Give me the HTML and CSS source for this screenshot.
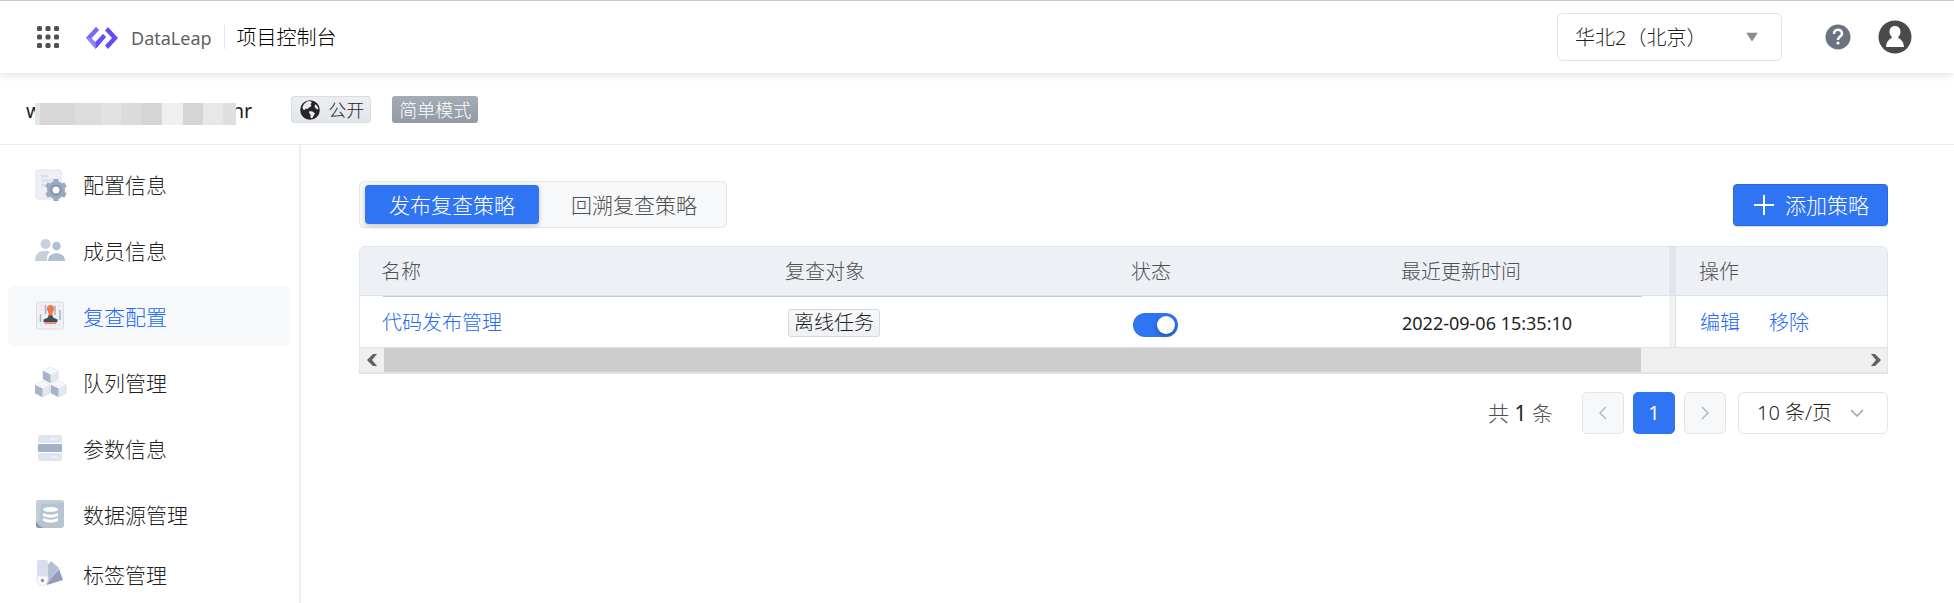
FILE: index.html
```
<!DOCTYPE html>
<html lang="zh-CN">
<head>
    <meta charset="UTF-8">
    <meta name="viewport" content="width=device-width, initial-scale=1.0">
    <title>项目控制台 - DataLeap</title>
    <link rel="stylesheet" href="styles.css">
</head>
<body>
    <header class="topbar">
        <button class="icon-button apps" aria-label="应用">
            <svg width="24" height="24" viewBox="0 0 24 24" fill="#505050">
                <rect x="1" y="1" width="5" height="5" rx="1.5"/><rect x="9.5" y="1" width="5" height="5" rx="1.5"/><rect x="18" y="1" width="5" height="5" rx="1.5"/>
                <rect x="1" y="9.5" width="5" height="5" rx="1.5"/><rect x="9.5" y="9.5" width="5" height="5" rx="1.5"/><rect x="18" y="9.5" width="5" height="5" rx="1.5"/>
                <rect x="1" y="18" width="5" height="5" rx="1.5"/><rect x="9.5" y="18" width="5" height="5" rx="1.5"/><rect x="18" y="18" width="5" height="5" rx="1.5"/>
            </svg>
        </button>
        <a href="#" class="brand">
            <svg width="32" height="22" viewBox="0 0 32 22">
                <path d="M10 0 13 3 5.500 11 9.500 15 17 7 20 10 9.500 22 0 11Z" fill="#8f83fb"/>
                <path d="M9.500 15 17 7 20 10 10 21.500Z" fill="#6650f5"/>
                <path d="M10 0 13 3 5.500 11 0 11Z" fill="#7a69f9"/>
                <path d="M22 0 32 11 22 22 19 18.500 26 11 19 3.500Z" fill="#624cf5"/>
            </svg>
            <span>DataLeap</span>
        </a>
        <span class="topbar-title">项目控制台</span>
        <div class="select region">
            <select aria-label="地域"><option>华北2（北京）</option></select>
            <svg width="12" height="9" viewBox="0 0 12 9"><path d="M0 0H12L6 9Z" fill="#8c8c8c"/></svg>
        </div>
        <button class="icon-button help" aria-label="帮助">
            <svg width="26" height="26" viewBox="0 0 26 26">
                <circle cx="13" cy="13" r="12.500" fill="#6b7280"/>
                <path d="M9 10C9 4.500 17 4.500 17 9.500 17 12.500 13 12.500 13 16" fill="none" stroke="#fff" stroke-width="2.500"/>
                <circle cx="13" cy="19" r="1.600" fill="#fff"/>
            </svg>
        </button>
        <button class="icon-button" aria-label="账户">
            <svg width="34" height="34" viewBox="0 0 34 34">
                <circle cx="17" cy="17" r="16.500" fill="#4a4a4a"/>
                <path d="M17 6C20.500 6 22.500 8.500 22.500 12 22.500 14.500 21 16 20 17.500 22 19.500 25.500 20 26 27H8C8.500 20 12 19.500 14 17.500 13 16 11.500 14.500 11.500 12 11.500 8.500 13.500 6 17 6Z" fill="#fff"/>
            </svg>
        </button>
    </header>

    <div class="project">
        <div class="project-name"><span>w</span><span class="mask"></span><span>nr</span></div>
        <span class="badge badge-open">
            <svg width="20" height="20" viewBox="0 0 20 20">
                <circle cx="10" cy="10" r="9.800" fill="#262626"/>
                <path d="M7 1.500 10 1 12 2.500 10.500 4 11.500 6 9 7.500 7.500 9 5.500 8.500 5 10 3 9.500 2.500 7 4 4ZM9.500 11 12.500 11.500 15 13.500 13.500 16 12 18.500 10.500 17.500 10.500 14.500 9 13ZM15.500 4 17.500 6.500 18.500 9.500 16.500 9 14.500 7Z" fill="#e9ecf0"/>
            </svg>
            公开
        </span>
        <span class="badge badge-mode">简单模式</span>
    </div>

    <div class="layout">
        <nav class="sidebar">
            <a href="#">
                <svg width="32" height="32" viewBox="0 0 32 32">
                    <rect x="1" y="1" width="25" height="29" rx="2" fill="#eef0f5" stroke="#e0e3ea"/>
                    <path d="M6 7H13M6 11.500H19M6 16H13" stroke="#dcdfe7" stroke-width="2.500"/>
                    <circle cx="21" cy="21" r="6.500" fill="none" stroke="#9aa9c2" stroke-width="5"/>
                    <path d="M21 10V14M21 28V32M11.500 15.500 15 17.500M27 24.500 30.500 26.500M11.500 26.500 15 24.500M27 17.500 30.500 15.500" stroke="#9aa9c2" stroke-width="5"/>
                    <circle cx="21" cy="21" r="4.500" fill="#fff" stroke="#8192ae" stroke-width="2"/>
                </svg>
                配置信息
            </a>
            <a href="#">
                <svg width="32" height="32" viewBox="0 0 32 32">
                    <circle cx="10.500" cy="9" r="5" fill="#c6d0dd"/>
                    <path d="M0 26C0 14 12 15 15 17 12 19 12 22 12 26Z" fill="#c6d0dc"/>
                    <circle cx="21.500" cy="11" r="4.200" fill="#b1bfd3"/>
                    <path d="M13 26C13 15.500 30 15.500 30 26Z" fill="#b1bfd3"/>
                </svg>
                成员信息
            </a>
            <a href="#" class="active">
                <svg width="32" height="32" viewBox="0 0 32 32">
                    <rect x="1.500" y="1" width="27" height="27" rx="2" fill="#f0f1f5" stroke="#d8dbe2"/>
                    <path d="M5.500 5H25M5.500 9H25M5.500 24H25" stroke="#cdd3dd" stroke-dasharray="1.500 3"/>
                    <path d="M5.500 13V21M10.500 4V13M25 9V19M20 5V14" stroke="#a7b1c0" stroke-width="1.500"/>
                    <path d="M13.500 12 12 8.500A3.600 3.600 0 1 1 19 8.500L17.500 12V15H13.500Z" fill="#f4774b"/>
                    <path d="M13.500 14.500H17.500L18 16.500 22.500 18.500V21H8.500V18.500L13 16.500Z" fill="#3f505b"/>
                    <path d="M9 21H22L21 23H10Z" fill="#ef8b69"/>
                </svg>
                复查配置
            </a>
            <a href="#">
                <svg width="32" height="32" viewBox="0 0 32 32">
                    <g id="cube">
                        <path d="M15.500 0 23 4V12L15.500 16 8 12V4Z" fill="#e4e9f1" stroke="#cfd6e0" stroke-width=".8"/>
                        <path d="M15.500 0 23 4 15.500 7.500 8 4Z" fill="#f6f8fb"/>
                        <path d="M8 4 15.500 7.500V16L8 12Z" fill="#a6b3c9"/>
                    </g>
                    <use href="#cube" x="-8" y="14"/>
                    <use href="#cube" x="8" y="14"/>
                </svg>
                队列管理
            </a>
            <a href="#">
                <svg width="32" height="32" viewBox="0 0 32 32">
                    <rect x="3" y="2" width="24" height="8" rx="2" fill="#dfe5ef"/>
                    <rect x="3" y="11" width="24" height="8" rx="1" fill="#a3b1c8"/>
                    <rect x="3" y="20" width="24" height="8" rx="2" fill="#dfe5ef"/>
                    <path d="M16 7 17 5M19 7 20 5M22 7 23 5M16 25 17 23M19 25 20 23M22 25 23 23" stroke="#fff"/>
                </svg>
                参数信息
            </a>
            <a href="#">
                <svg width="32" height="32" viewBox="0 0 32 32">
                    <rect x="1" y="1" width="28" height="28" rx="3" fill="#b9c4d1"/>
                    <path d="M1 4A3 3 0 0 1 4 1H26A3 3 0 0 1 29 4L6 5 4 22 1 26Z" fill="#c5ced8"/>
                    <path d="M1 21Q2 27 9 29H4A3 3 0 0 1 1 26Z" fill="#8794ac"/>
                    <ellipse cx="15.500" cy="10.500" rx="7.500" ry="2.500" fill="#fff"/>
                    <path d="M8 14Q15.500 17.500 23 14V17Q15.500 20.500 8 17ZM8 19Q15.500 22.500 23 19V22Q15.500 25.500 8 22Z" fill="#fff"/>
                </svg>
                数据源管理
            </a>
            <a href="#">
                <svg width="32" height="32" viewBox="0 0 32 32">
                    <path d="M12 24 24 10 28 21 12 26Z" fill="#929dba"/>
                    <path d="M12 7 16 2 24 9 12 25Z" fill="#b5bed5"/>
                    <path d="M2 3Q2 1 4 1H11Q13 1 13 3V17H2Z" fill="#d9deeb"/>
                    <path d="M2 17H13V21A5.500 5.500 0 0 1 2 21Z" fill="#fafbfd" stroke="#d5dae4" stroke-width=".8"/>
                    <circle cx="7.500" cy="21.500" r="1.700" fill="#8794ac"/>
                </svg>
                标签管理
            </a>
        </nav>

        <main class="content">
            <div class="toolbar">
                <div class="tabs" role="tablist">
                    <button class="active" role="tab" aria-selected="true">发布复查策略</button>
                    <button role="tab" aria-selected="false">回溯复查策略</button>
                </div>
                <button class="add-button">
                    <svg width="20" height="20" viewBox="0 0 20 20"><path d="M10 0V20M0 10H20" stroke="#fff" stroke-width="2"/></svg>
                    添加策略
                </button>
            </div>

            <div class="table-box">
                <table>
                    <colgroup>
                        <col>
                        <col class="col-target">
                        <col class="col-status">
                        <col class="col-time">
                        <col class="col-ops">
                    </colgroup>
                    <thead>
                        <tr>
                            <th>名称</th>
                            <th>复查对象</th>
                            <th>状态</th>
                            <th class="edge">最近更新时间</th>
                            <th class="ops-cell">操作</th>
                        </tr>
                    </thead>
                    <tbody>
                        <tr>
                            <td><a href="#">代码发布管理</a></td>
                            <td><span class="tag">离线任务</span></td>
                            <td><input type="checkbox" class="switch" aria-label="状态" checked></td>
                            <td class="edge">2022-09-06 15:35:10</td>
                            <td class="ops-cell"><div class="ops"><a href="#">编辑</a><a href="#">移除</a></div></td>
                        </tr>
                    </tbody>
                </table>
                <div class="scrollbar">
                    <button aria-label="向左滚动"><svg width="11" height="12" viewBox="0 0 11 12"><path d="M6 0H10L5 6 10 12H6L0 6Z" fill="#606060"/></svg></button>
                    <div class="track"><div class="thumb"></div></div>
                    <button aria-label="向右滚动"><svg width="11" height="12" viewBox="0 0 11 12"><path d="M5 0H1L6 6 1 12H5L11 6Z" fill="#606060"/></svg></button>
                </div>
            </div>

            <div class="pagination">
                <span class="total">共 <b>1</b> 条</span>
                <button class="page" aria-label="上一页"><svg width="8" height="14" viewBox="0 0 8 14"><path d="M7 1 1 7 7 13" fill="none" stroke="#b4b7bd" stroke-width="1.500"/></svg></button>
                <button class="page current">1</button>
                <button class="page" aria-label="下一页"><svg width="8" height="14" viewBox="0 0 8 14"><path d="M1 1 7 7 1 13" fill="none" stroke="#b4b7bd" stroke-width="1.500"/></svg></button>
                <div class="select page-size">
                    <select aria-label="每页条数"><option>10 条/页</option></select>
                    <svg width="14" height="8" viewBox="0 0 14 8"><path d="M1 1 7 7 13 1" fill="none" stroke="#9aa0a8" stroke-width="1.500"/></svg>
                </div>
            </div>
        </main>
    </div>
</body>
</html>
```
FILE: styles.css
```
* {
    box-sizing: border-box;
}
body {
    display: flex;
    flex-direction: column;
    min-height: 100vh;
    margin: 0;
    background-color: #fff;
    color: #1f1f1f;
    font-family: "Noto Sans", "Noto Sans CJK SC", sans-serif;
    font-size: 20px;
    font-weight: 300;
    line-height: 28px;
}
button,
select {
    font: inherit;
    color: inherit;
    cursor: pointer;
}
a {
    color: #2468f2;
    text-decoration: none;
}
svg {
    display: block;
    flex-shrink: 0;
}
.topbar {
    display: flex;
    align-items: center;
    height: 73px;
    padding: 0 42px 0 36px;
    border-top: 1px solid #c8c8c8;
    box-shadow: 0 2px 8px rgba(0, 0, 0, 0.12);
}
.icon-button {
    padding: 0;
    border: none;
    background: none;
}
.apps {
    margin-right: 26px;
}
.brand {
    display: flex;
    align-items: center;
    gap: 13px;
    margin-right: 12px;
    padding-top: 1px;
    color: #606266;
    font-size: 18px;
    font-weight: 400;
}
.topbar-title {
    padding: 2px 0 0 12px;
    border-left: 1px solid #e4e5e8;
    line-height: 22px;
    color: #000;
}
.select {
    position: relative;
}
.select select {
    width: 100%;
    height: 100%;
    border: 1px solid #e1e3e8;
    border-radius: 6px;
    background-color: #fff;
    appearance: none;
}
.select svg {
    position: absolute;
    top: 50%;
    right: 24px;
    transform: translateY(-50%);
    pointer-events: none;
}
.region {
    width: 225px;
    height: 48px;
    margin-left: auto;
    margin-right: 43px;
}
.region select {
    padding: 2px 17px 0;
}
.help {
    margin-right: 27px;
}
.project {
    display: flex;
    align-items: center;
    height: 72px;
    padding: 2px 26px 0;
    border-bottom: 1px solid #ededed;
}
.project-name {
    display: flex;
    align-items: center;
    margin-right: 39px;
    padding-top: 2px;
    font-weight: 400;
}
.mask {
    width: 201px;
    height: 22px;
    margin: 6px -4px 0 -7px;
    z-index: 1;
    background: linear-gradient(to right, #e4e4e4 5px, #d8d7d6 5px 40px, #dcdcdc 40px 66px, #e2e2e2 66px 86px, #dcdbda 86px 106px, #d5d5d5 106px 127px, #edeff1 127px 148px, #d5d5d5 148px 168px, #e8e8e8 168px 188px, #e0dfde 188px);
}
.badge {
    display: flex;
    align-items: center;
    gap: 8px;
    height: 27px;
    border-radius: 3px;
    font-size: 18px;
}
.badge-open {
    margin-right: 21px;
    padding: 0 6px 0 8px;
    border: 1px solid #d9dce1;
    background: linear-gradient(#eceef1, #e2e5ea);
}
.badge-mode {
    padding: 0 7px;
    background: linear-gradient(#a4acb5, #929aa3);
    color: #fff;
}
.layout {
    display: flex;
    flex: 1;
}
.sidebar {
    display: flex;
    flex-direction: column;
    gap: 6px;
    width: 301px;
    padding: 9px 9px 0 8px;
    border-right: 2px solid #efefef;
}
.sidebar a {
    display: flex;
    align-items: center;
    gap: 16px;
    height: 60px;
    padding: 1px 0 0 27px;
    border-radius: 6px;
    color: #1f1f1f;
    font-size: 21px;
}
.sidebar a.active {
    background-color: #f7f8fa;
    color: #2468f2;
}
.sidebar a:last-child {
    height: 48px;
}
.content {
    flex: 1;
    padding: 36px 66px 0 58px;
}
.toolbar {
    display: flex;
    align-items: center;
    justify-content: space-between;
    margin-bottom: 18px;
}
.tabs {
    display: flex;
    padding: 3px 5px;
    border: 1px solid #e3e5e9;
    border-radius: 5px;
    background-color: #f7f8fa;
}
.tabs button {
    height: 39px;
    padding: 0 24px;
    border: none;
    border-radius: 4px;
    background: none;
    color: #505050;
    font-size: 21px;
}
.tabs button + button {
    margin-left: 8px;
}
.tabs button.active {
    background-color: #2f74f2;
    box-shadow: 0 2px 5px rgba(0, 0, 0, 0.2);
    color: #fff;
}
.add-button {
    display: flex;
    align-items: center;
    gap: 11px;
    height: 42px;
    padding: 0 18px 0 20px;
    border: 1px solid #2969e0;
    border-radius: 4px;
    background-color: #2f74f2;
    box-shadow: 0 1px 1px rgba(0, 0, 0, 0.15);
    color: #fff;
    font-size: 21px;
}
.table-box {
    border: 1px solid #e0e3e8;
    border-bottom-width: 2px;
    border-radius: 6px 6px 0 0;
    overflow: hidden;
}
table {
    width: 100%;
    border-collapse: separate;
    border-spacing: 0;
    table-layout: fixed;
}
.col-target {
    width: 346px;
}
.col-status {
    width: 270px;
}
.col-time {
    width: 296px;
}
.col-ops {
    width: 211px;
}
th,
td {
    padding: 2px 0 0 21px;
    text-align: left;
    font-weight: 300;
}
th {
    height: 49px;
    border-bottom: 1px solid #dfe2e6;
    background-color: #edf1f6;
    color: #505050;
}
td {
    height: 52px;
    padding-left: 22px;
    border-bottom: 1px solid #dfe2e6;
}
/* shadow strip next to the fixed column */
.edge {
    border-right: 1px solid #dfe2e6;
    background-image: linear-gradient(rgba(0, 0, 0, 0.05), rgba(0, 0, 0, 0.05));
    background-position: right;
    background-size: 6px 100%;
    background-repeat: no-repeat;
}
td.edge {
    font-size: 18px;
    font-weight: 400;
}
.ops-cell {
    padding-left: 23px;
}
tbody {
    background: linear-gradient(#c8c8c8, #c8c8c8) 23px 0 / calc(100% - 268px) 1px no-repeat;
}
.tag {
    display: inline-block;
    height: 28px;
    margin-left: 2px;
    padding: 0 5px;
    border: 1px solid #d5d8dd;
    border-radius: 3px;
    background: linear-gradient(#f7f8fa, #eff1f4);
    line-height: 26px;
    vertical-align: middle;
}
.switch {
    display: flex;
    align-items: center;
    justify-content: flex-end;
    width: 45px;
    height: 24px;
    margin: 5px 0 0 1px;
    padding: 0 3px;
    border-radius: 12px;
    background-color: #2f74f2;
    appearance: none;
    cursor: pointer;
}
.switch::after {
    content: "";
    width: 18px;
    height: 18px;
    border-radius: 50%;
    background-color: #fff;
    box-shadow: 0 2px 4px rgba(0, 0, 0, 0.3);
}
.switch:not(:checked) {
    justify-content: flex-start;
    background-color: #c9cdd4;
}
.ops {
    display: flex;
    gap: 29px;
    padding-left: 1px;
}
.scrollbar {
    display: flex;
    height: 24px;
    background-color: #efefef;
}
.scrollbar button {
    display: flex;
    align-items: center;
    justify-content: center;
    width: 24px;
    padding: 0;
    border: none;
    background: none;
}
.track {
    flex: 1;
}
.thumb {
    width: 85%;
    height: 100%;
    background-color: #cdcdcd;
}
.pagination {
    display: flex;
    align-items: center;
    justify-content: flex-end;
    gap: 9px;
    padding-top: 18px;
}
.total {
    margin-right: 20px;
    color: #505050;
    font-size: 21px;
}
.total b {
    color: #1f1f1f;
    font-weight: 400;
}
.page {
    display: flex;
    align-items: center;
    justify-content: center;
    width: 42px;
    height: 42px;
    padding: 0;
    border: 1px solid #e3e5e9;
    border-radius: 5px;
    background-color: #f7f8fa;
}
.page.current {
    border-color: #2f74f2;
    background-color: #2f74f2;
    color: #fff;
    font-weight: 400;
}
.page-size {
    width: 150px;
    height: 42px;
    margin-left: 3px;
}
.page-size select {
    padding: 0 18px;
}
```
